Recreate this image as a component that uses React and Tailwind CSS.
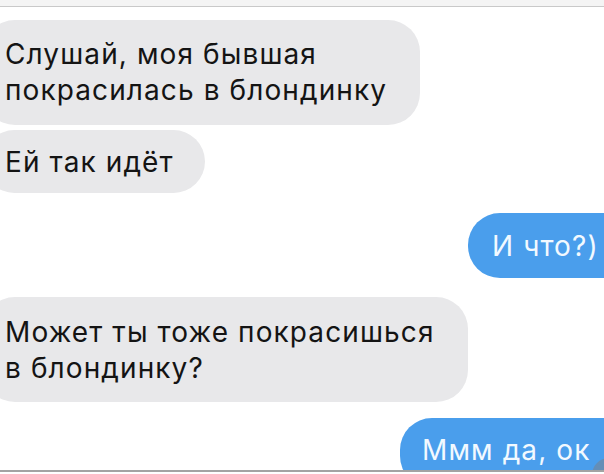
import React from 'react';

const FONT = { fontFamily: 'Inter, "Liberation Sans", Arial, sans-serif' };

function Incoming({ lines, className }) {
  return (
    <div
      className={`-ml-[17px] rounded-[32px] bg-[#e8e8ea] pl-[22px] text-[28px] leading-[36px] tracking-[1.1px] text-[#141414] ${className}`}
    >
      {lines.map((l) => (
        <div key={l} className="whitespace-nowrap">{l}</div>
      ))}
    </div>
  );
}

function Outgoing({ text, className }) {
  return (
    <div
      className={`rounded-[32px] bg-[#4a9eec] text-[28px] leading-[36px] tracking-[1.1px] text-[#f2f9ff] whitespace-nowrap ${className}`}
    >
      {text}
    </div>
  );
}

export default function App() {
  return (
    <div className="flex h-[474px] w-[604px] flex-col overflow-hidden bg-white" style={FONT}>
      <div className="h-[7px] shrink-0 border-b border-[#c9c9c9] bg-[#f4f4f4]" />
      <div className="flex min-h-0 flex-1 flex-col overflow-hidden">
        <div className="mt-[13px] shrink-0">
          <Incoming
            className="w-[437px] pt-[16px] pb-[17px]"
            lines={['Слушай, моя бывшая', 'покрасилась в блондинку']}
          />
        </div>
        <div className="mt-[5px] shrink-0">
          <Incoming className="w-[222px] pt-[14px] pb-[13px]" lines={['Ей так идёт']} />
        </div>
        <Outgoing
          text="И что?)"
          className="mt-[20px] -mr-[30px] w-[166px] shrink-0 self-end pl-[24px] pt-[15px] pb-[14px]"
        />
        <div className="mt-[19px] shrink-0">
          <Incoming
            className="w-[485px] pt-[17px] pb-[16px]"
            lines={['Может ты тоже покрасишься', 'в блондинку?']}
          />
        </div>
        <div className="relative mt-[16px] shrink-0 self-end">
          <Outgoing text="Ммм да, ок" className="-mr-[30px] w-[234px] pl-[22px] pt-[14px] pb-[20px]" />
          <div className="absolute top-[40px] right-[-22px] h-[34px] w-[34px] rounded-full bg-[#6f87a1] opacity-70" />
        </div>
      </div>
      <div className="h-[2px] shrink-0 bg-[#a3a3a3]" />
      <div className="h-[2px] shrink-0 bg-white" />
    </div>
  );
}
